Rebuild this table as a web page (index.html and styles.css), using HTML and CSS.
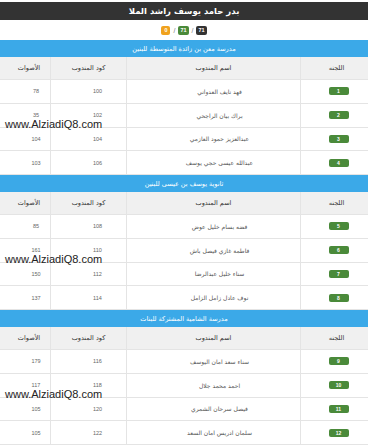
FILE: index.html
```html
<!DOCTYPE html>
<html lang="ar" dir="rtl">
<head>
<meta charset="utf-8">
<title>بدر حامد يوسف راشد الملا</title>
<link rel="stylesheet" href="styles.css">
</head>
<body>
<div class="page">
  <div class="title">بدر حامد يوسف راشد الملا</div>
  <div class="stats">
    <span class="pill pill-dark">71</span><span class="sep">/</span><span class="pill pill-green">71</span><span class="sep">/</span><span class="pill pill-orange">0</span>
  </div>

  <section class="school">
    <div class="school-name">مدرسة معن بن زائدة المتوسطة للبنين</div>
    <div class="row head"><div class="c1">اللجنه</div><div class="c2">اسم المندوب</div><div class="c3">كود المندوب</div><div class="c4">الأصوات</div></div>
    <div class="row"><div class="c1"><span class="num">1</span></div><div class="c2">فهد نايف العدواني</div><div class="c3">100</div><div class="c4">78</div></div>
    <div class="row"><div class="c1"><span class="num">2</span></div><div class="c2">براك بيان الراجحي</div><div class="c3">102</div><div class="c4">35</div></div>
    <div class="row"><div class="c1"><span class="num">3</span></div><div class="c2">عبدالعزيز حمود العازمي</div><div class="c3">104</div><div class="c4">104</div></div>
    <div class="row"><div class="c1"><span class="num">4</span></div><div class="c2">عبدالله عيسى حجي يوسف</div><div class="c3">106</div><div class="c4">103</div></div>
    <div class="mark" dir="ltr">www.AlziadiQ8.com</div>
  </section>

  <section class="school">
    <div class="school-name">ثانوية يوسف بن عيسى للبنين</div>
    <div class="row head"><div class="c1">اللجنه</div><div class="c2">اسم المندوب</div><div class="c3">كود المندوب</div><div class="c4">الأصوات</div></div>
    <div class="row"><div class="c1"><span class="num">5</span></div><div class="c2">فضه بسام خليل عوض</div><div class="c3">108</div><div class="c4">85</div></div>
    <div class="row"><div class="c1"><span class="num">6</span></div><div class="c2">فاطمة غازي فيصل باش</div><div class="c3">110</div><div class="c4">161</div></div>
    <div class="row"><div class="c1"><span class="num">7</span></div><div class="c2">سناء خليل عبدالرضا</div><div class="c3">112</div><div class="c4">150</div></div>
    <div class="row"><div class="c1"><span class="num">8</span></div><div class="c2">نوف عادل زامل الزامل</div><div class="c3">114</div><div class="c4">137</div></div>
    <div class="mark" dir="ltr">www.AlziadiQ8.com</div>
  </section>

  <section class="school">
    <div class="school-name">مدرسة الشامية المشتركة للبنات</div>
    <div class="row head"><div class="c1">اللجنه</div><div class="c2">اسم المندوب</div><div class="c3">كود المندوب</div><div class="c4">الأصوات</div></div>
    <div class="row"><div class="c1"><span class="num">9</span></div><div class="c2">سناء سعد امان اليوسف</div><div class="c3">116</div><div class="c4">179</div></div>
    <div class="row"><div class="c1"><span class="num">10</span></div><div class="c2">احمد محمد جلال</div><div class="c3">118</div><div class="c4">117</div></div>
    <div class="row"><div class="c1"><span class="num">11</span></div><div class="c2">فيصل سرحان الشمري</div><div class="c3">120</div><div class="c4">105</div></div>
    <div class="row"><div class="c1"><span class="num">12</span></div><div class="c2">سلمان ادريس امان السعد</div><div class="c3">122</div><div class="c4">105</div></div>
    <div class="mark" dir="ltr">www.AlziadiQ8.com</div>
  </section>
</div>
</body>
</html>
```
FILE: styles.css
```css
html, body {
  margin: 0;
  padding: 0;
  background: #ffffff;
}
body {
  font-family: "DejaVu Sans", "Noto Sans", sans-serif;
  color: #555;
  overflow: hidden;
}
.page {
  padding-top: 2px;
  direction: rtl;
}
.title {
  height: 18px;
  background: #333333;
  color: #ffffff;
  font-size: 8.5px;
  font-weight: bold;
  display: flex;
  align-items: center;
  justify-content: center;
}
.stats {
  height: 20px;
  display: flex;
  align-items: center;
  justify-content: center;
  gap: 3px;
  direction: rtl;
}
.pill {
  display: inline-flex;
  align-items: center;
  justify-content: center;
  height: 9px;
  min-width: 5px;
  padding: 0 2px;
  border-radius: 2px;
  color: #fff;
  font-size: 5.5px;
  font-weight: bold;
  font-family: "Liberation Sans", sans-serif;
}
.pill-dark { background: #333333; }
.pill-green { background: #4a8a3a; }
.pill-orange { background: #f0a21e; }
.sep {
  font-size: 7px;
  color: #777;
  font-family: "Liberation Sans", sans-serif;
}
.school {
  position: relative;
}
.school-name {
  height: 17px;
  background: #3ba9e8;
  color: #ffffff;
  font-size: 6.5px;
  display: flex;
  align-items: center;
  justify-content: center;
}
.row {
  display: grid;
  grid-template-columns: 68px 174px 76px 50px;
  height: 23.75px;
  box-sizing: border-box;
  border-bottom: 1px solid #e4e4e4;
  font-size: 5.5px;
  color: #666;
}
.row > div {
  display: flex;
  align-items: center;
  justify-content: center;
  border-left: 1px solid #e4e4e4;
}
.row > div.c4 {
  border-left: none;
}
.row .c2 {
  font-size: 6px;
  color: #555;
}
.row.head {
  height: 23px;
  background: #f0f0f0;
  font-size: 6.5px;
  color: #333;
}
.row.head .c2 {
  font-size: 6.5px;
  color: #333;
}
.row .c1 { padding-left: 8px; }
.row .c2 { padding-left: 12px; }
.row .c3 { padding-left: 18px; font-family: "Liberation Sans", sans-serif; }
.row .c4 { padding-left: 22px; font-family: "Liberation Sans", sans-serif; }
.row.head .c1 { padding-left: 4px; }
.row.head .c2 { padding-left: 0; }
.row.head .c3 { padding-left: 0; font-family: "DejaVu Sans", sans-serif; }
.row.head .c4 { padding-left: 8px; font-family: "DejaVu Sans", sans-serif; }
.num {
  display: inline-flex;
  align-items: center;
  justify-content: center;
  width: 20px;
  height: 8px;
  border-radius: 2px;
  background: #4a8a3a;
  color: #fff;
  font-size: 5px;
  font-weight: bold;
  font-family: "Liberation Sans", sans-serif;
}
.mark {
  position: absolute;
  left: 5px;
  top: 78px;
  font-family: "Liberation Sans", Arial, sans-serif;
  font-size: 11px;
  line-height: 13px;
  color: #222;
  direction: ltr;
}
```
